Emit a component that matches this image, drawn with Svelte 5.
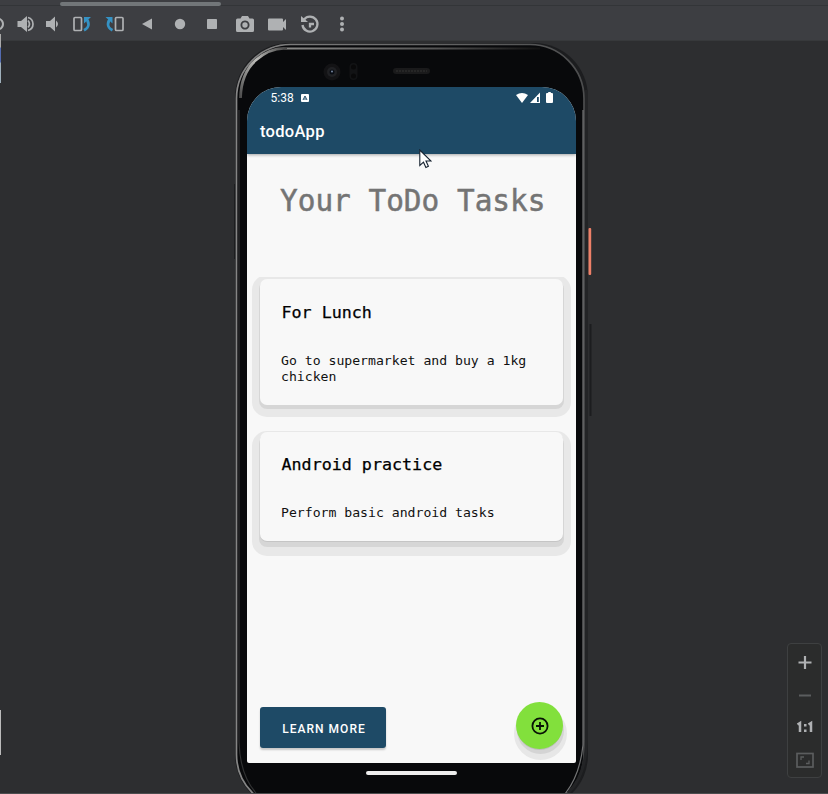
<script>
  const tasks = [
    { title: 'For Lunch', text: 'Go to supermarket and buy a 1kg chicken', kind: 'tall' },
    { title: 'Android practice', text: 'Perform basic android tasks', kind: 'short' }
  ];
</script>

<div class="emulator">
  <header class="toolbar">
    <span class="scroll"></span>
    <svg width="360" height="40" viewBox="0 0 360 40" fill="#afb1b3">
      <path d="M0 18Q4 20 4 24T0 30V28Q2 26 2 24T0 20Z" />
      <path d="M17.500 21h3.500l6-5v16l-6-5h-3.500z" />
      <path d="M28 20.500q3 3.500 0 7M28 17.500q5 1.500 5 6.500t-5 6.500" fill="none" stroke="#afb1b3" stroke-width="1.700" />
      <path d="M46 21h4l5-4.500v15l-5-4.500h-4zM56 20.500q4 3.500 0 7z" />
      <rect x="74" y="17.500" width="7.500" height="13" rx="1" fill="none" stroke="#afb1b3" stroke-width="1.700" />
      <path d="M84 30.300q4.500-2.300 4.500-6t-3-6" fill="none" stroke="#3592c4" stroke-width="2.700" />
      <path d="M91 17h-7v6.500z" fill="#3592c4" />
      <path d="M112.500 30.300q-4.500-2.300-4.500-6t3-6" fill="none" stroke="#3592c4" stroke-width="2.700" />
      <path d="M105.500 17h7v6.500z" fill="#3592c4" />
      <rect x="115.500" y="17.500" width="7.500" height="13" rx="1" fill="none" stroke="#afb1b3" stroke-width="1.700" />
      <path d="M142 24l10-5.500v11z" />
      <circle cx="180" cy="24" r="5.200" />
      <rect x="207" y="19" width="10" height="10" rx=".7" />
      <path fill-rule="evenodd" d="M237 18.500h3.500l1.500-2.500h6l1.500 2.500h3q1.500 0 1.500 1.500v10.500q0 1.500-1.500 1.500h-15q-1.500 0-1.500-1.500V20q0-1.500 1.500-1.500zM245 20.500a4.500 4.500 0 1 0 .01 0z" />
      <circle cx="245" cy="25" r="2.700" />
      <path d="M269 18.500h13q1 0 1 1v2.500l3-3v11l-3-3v2.500q0 1-1 1h-13q-1 0-1-1v-10q0-1 1-1z" />
      <path d="M304 19.500a7.500 7.500 0 1 1-1.500 5.500M310 27.500v-3.500h4" fill="none" stroke="#afb1b3" stroke-width="2.300" />
      <path d="M301 16v6h7z" />
      <circle cx="342" cy="18.500" r="2" /><circle cx="342" cy="24" r="2" /><circle cx="342" cy="29.500" r="2" />
    </svg>
  </header>

  <main class="workspace">
    <section class="phone">
      <svg class="shell" width="360" height="753" viewBox="234 41 360 753">
        <defs>
          <linearGradient id="rim" x1="0" x2="1"><stop stop-color="#858585" /><stop offset=".22" stop-color="#777" /><stop offset="1" stop-color="#4c4d4e" /></linearGradient>
          <linearGradient id="shine" x1="0" y1="1" x2="1" y2="0"><stop offset="0" stop-color="#4b4b4b" /><stop offset=".55" stop-color="#bdbdba" /><stop offset="1" stop-color="#444" /></linearGradient>
          <linearGradient id="topline" gradientUnits="userSpaceOnUse" x1="280" y1="0" x2="540" y2="0"><stop stop-color="#8a8a88" /><stop offset=".6" stop-color="#555" /><stop offset="1" stop-color="#111" /></linearGradient>
        </defs>
        <path d="M234 184v75M590.500 324v92" stroke="#1c1d1f" stroke-width="2" />
        <rect x="235" y="43" width="353" height="766" rx="54" fill="#1c1d1f" />
        <rect x="236.500" y="44.500" width="347.500" height="764" rx="54" fill="#08090b" stroke="url(#rim)" stroke-width="1.700" />
        <path d="M286 48.500H540" fill="none" stroke="url(#topline)" stroke-width="2" />
        <path d="M240.500 98Q241 73 256 60T287 48.500" fill="none" stroke="url(#shine)" stroke-width="2.800" />
        <path d="M583 110V745Q580 775 565 794" fill="none" stroke="#737475" stroke-width="1.200" />
        <path d="M586.500 90V740Q586 776 568 793" fill="none" stroke="#232426" stroke-width="3" />
        <path d="M239 110V742Q240 775 256 793" fill="none" stroke="#303132" stroke-width="1.200" />
        <rect x="588.500" y="228" width="2.700" height="47" rx="1" fill="#ee8068" />
        <circle cx="332" cy="72" r="8.500" fill="#131315" /><circle cx="332" cy="72" r="5" fill="#202124" /><circle cx="332" cy="72" r="2.500" fill="#080c13" /><circle cx="332" cy="71.500" r="1" fill="#7687a2" />
        <rect x="349.500" y="63" width="8" height="17" rx="4" fill="#121315" /><circle cx="353.500" cy="67" r="2.500" fill="#09090a" /><circle cx="353.500" cy="76" r="2.500" fill="#09090a" />
        <rect x="393" y="68" width="37" height="6" rx="3" fill="#1a1a1b" /><path d="M396 71h31" stroke="#262626" stroke-width="2" stroke-dasharray="2 1" />
        <path d="M247 755h329v8H247z" fill="#000" />
      </svg>

      <div class="screen">
        <div class="appbar">
          <div class="status">
            <span class="clock">5:38</span>
            <svg width="8" height="8" viewBox="0 0 8 8"><rect width="8" height="8" rx="1" fill="#fff" /><path d="M2 6l2-4 2 4M3 5h2" fill="none" stroke="#1e4a66" /></svg>
            <svg class="signals" width="38" height="12" viewBox="0 0 38 12" fill="#fff">
              <path d="M0 3Q6-1 12 3L6 11zM24 .5V11H14z" /><path d="M21 5h1.800v5h-1.800z" fill="#1e4a66" />
              <path d="M31 1h1.200V0h2.600v1H36q1 0 1 1v8q0 1-1 1h-5q-1 0-1-1V2q0-1 1-1z" />
            </svg>
          </div>
          <div class="appname">todoApp</div>
        </div>

        <div class="content">
          <h1>Your ToDo Tasks</h1>
          <div class="tasks">
            {#each tasks as task}
              <article class={task.kind}>
                <h2>{task.title}</h2>
                <p>{task.text}</p>
              </article>
            {/each}
          </div>
          <footer>
            <button class="learn">LEARN MORE</button>
            <button class="add" aria-label="Add task">
              <svg width="18" height="18" viewBox="0 0 18 18" fill="none" stroke="#081206" stroke-width="1.800"><circle cx="9" cy="9" r="7.600" /><path d="M9 5v8M5 9h8" /></svg>
            </button>
          </footer>
        </div>
      </div>
      <div class="homebar"></div>
    </section>

    <aside class="zoom">
      <svg width="34" height="134" viewBox="0 0 34 134">
        <path d="M10.500 18.500h13M17 12v13" stroke="#afb1b3" stroke-width="2.200" />
        <path d="M11 51.500h12" stroke="#5b5d5e" stroke-width="2" />
        <path d="M9.500 80.500l2.500-1.500v9M20.500 80.500l2.500-1.500v9" fill="none" stroke="#afb1b3" stroke-width="2.500" />
        <path d="M16 80h2.500v2.500H16zM16 85.500h2.500V88H16z" fill="#afb1b3" />
        <rect x="9" y="109.500" width="16" height="13.500" fill="none" stroke="#5b5d5e" stroke-width="1.700" />
        <path d="M13 116v-3h3M21 116.500v3h-3" fill="none" stroke="#5b5d5e" stroke-width="1.300" />
      </svg>
    </aside>
  </main>
  <span class="edge top"></span>
  <span class="edge bottom"></span>
  <svg class="cursor" width="13" height="20" viewBox="0 0 13 20"><path d="M.8 1v15.500l3.700-3.300 2.400 5.300 2.500-1.200L7 12h5z" fill="#fff" stroke="#14202e" stroke-width="1.100" /></svg>
</div>

<style>
  :global(body) { margin: 0; background: #2d2e30; overflow: hidden; }
  .emulator { position: relative; width: 828px; height: 794px; overflow: hidden; display: flex; flex-direction: column; background: #2d2e30; }
  .toolbar { position: relative; height: 40px; border-bottom: 1px solid #37393b; background: linear-gradient(#3d3e42 0 5px, #333538 5px 6px, #3d3e42 6px); }
  .toolbar svg { display: block; }
  .scroll { position: absolute; left: 60px; top: 2px; width: 161px; height: 4px; border-radius: 2px; background: #727679; }
  .workspace { height: 752px; display: flex; align-items: flex-start; border-bottom: 1px solid #4b4c4e; }
  .phone { position: relative; flex: none; width: 360px; height: 752px; overflow: hidden; margin-left: 234px; display: flow-root; }
  .shell { position: absolute; inset: 0; }
  .screen { position: relative; width: 329px; height: 676px; margin: 46px 0 0 13px; overflow: hidden; border-radius: 34px 34px 2px 2px; background: #f8f8f8; display: flex; flex-direction: column; }
  .appbar { height: 67px; flex: none; background: #1e4a66; color: #fff; box-shadow: 0 1px 3px #0005; font-family: Roboto, sans-serif; }
  .status { height: 22px; padding: 0 22px 0 23.500px; display: flex; align-items: center; font-size: 12px; letter-spacing: 0; gap: 7px; }
  .signals { margin-left: auto; }
  .appname { padding-left: 13px; line-height: 46px; font-size: 16.500px; font-weight: 500; letter-spacing: .3px; }
  .content { flex: 1; display: flex; flex-direction: column; font-family: 'DejaVu Sans Mono', monospace; }
  h1 { margin: 30px 0 0 33px; font-size: 29.400px; line-height: 35px; font-weight: 400; color: #747474; -webkit-text-stroke: .5px #747474; white-space: nowrap; }
  .tasks { margin: 60px 13px 0; display: flex; flex-direction: column; gap: 27px; }
  article { box-sizing: border-box; padding: 21px 20px 0 21.500px; border-radius: 7px; background: #f8f8f8; }
  .tall { height: 126px; box-shadow: 0 3px 0 1px #d6d6d6, 0 4px 0 8px #e8e8e8; clip-path: inset(-2px -20px -20px); }
  .short { height: 109px; padding-top: 20px; box-shadow: 0 1px 0 #c5c5c5, 0 5px 0 1px #d6d6d6, 0 7px 0 8px #e8e8e8; clip-path: inset(-2px -20px -20px); }
  h2 { margin: 0; font-size: 16.700px; line-height: 24px; font-weight: 400; color: #000; -webkit-text-stroke: .25px #000; }
  p { margin: 29px 0 0 -.5px; font-size: 13.150px; line-height: 16px; color: #111; }
  footer { margin: auto 13px 14px; display: flex; align-items: center; justify-content: space-between; }
  button { border: 0; padding: 0; font: inherit; }
  .learn { width: 126px; height: 41px; margin-top: 3px; padding-left: 2px; border-radius: 3px; background: #1e4a66; color: #fff; font: 500 12px/44px Roboto, sans-serif; letter-spacing: 1.020px; box-shadow: 0 2px 2px #0003; }
  .add { width: 47px; height: 47px; border-radius: 50%; background: #82e03c; display: flex; align-items: center; justify-content: center; box-shadow: 0 2px 0 -1px #bdbdbd, 1px 5px 0 #d4d4d4, 1px 8px 0 3px #e7e7e7; }
  .homebar { position: relative; width: 91px; height: 4px; margin: 8px 0 0 132px; border-radius: 2px; background: #eee; }
  .zoom { box-sizing: border-box; width: 35px; height: 135px; margin: 602px 6px 0 auto; border: 1px solid #3e4041; border-radius: 4px; background: #2b2c2c; }
  .zoom svg { display: block; }
  .edge { position: absolute; left: 0; width: 1px; background: #bbb; }
  .edge.top { top: 34px; height: 49px; background: linear-gradient(#aaa 0 13px, #536bb0 14px 28px, #9fb0bb 29px); }
  .edge.bottom { top: 710px; height: 45px; }
  .cursor { position: absolute; left: 419px; top: 149px; }
</style>
